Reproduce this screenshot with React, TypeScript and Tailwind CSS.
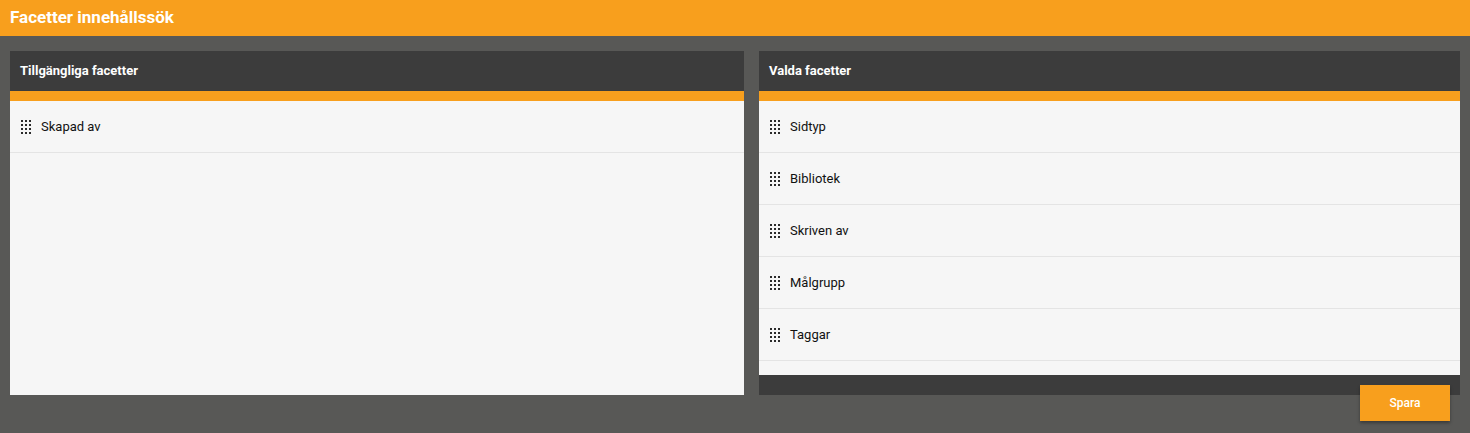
import { ReactNode } from "react";

const font = { fontFamily: "Roboto, 'Liberation Sans', sans-serif" };

function Grip() {
  return (
    <svg width="10" height="14" viewBox="0 0 10 14" className="flex-shrink-0">
      {[0, 4, 8].map((x) =>
        [0, 4, 8, 12].map((y) => <rect key={`${x}-${y}`} x={x} y={y} width="2" height="2" fill="#2b2b2b" />)
      )}
    </svg>
  );
}

function FacetRow({ label }: { label: string }) {
  return (
    <div className="flex items-center gap-[10px] h-[52px] pl-[11px] border-b border-[#e4e4e4] text-[13px] text-[#111111]">
      <Grip />
      <span>{label}</span>
    </div>
  );
}

function Panel({ title, children, footer, className }: { title: string; children: ReactNode; footer?: boolean; className?: string }) {
  return (
    <div className={`flex flex-col bg-[#f6f6f6] h-[344px] ${className ?? ""}`}>
      <div className="h-[40px] bg-[#3c3c3c] flex items-center px-[10px] text-white text-[13px] font-bold">{title}</div>
      <div className="h-[10px] bg-[#f89f1d]" />
      <div className="flex-1">{children}</div>
      {footer && <div className="h-[20px] bg-[#3c3c3c]" />}
    </div>
  );
}

export default function App() {
  const available = ["Skapad av"];
  const selected = ["Sidtyp", "Bibliotek", "Skriven av", "Målgrupp", "Taggar"];

  return (
    <div className="min-h-screen bg-[#585856]" style={font}>
      {/* Title bar */}
      <div className="h-[36px] bg-[#f89f1d] flex items-center px-[10px]">
        <h1 className="text-white text-[17px] font-bold">Facetter innehållssök</h1>
      </div>

      <div className="pt-[15px] px-[10px]">
        <div className="flex gap-[15px]">
          <Panel title="Tillgängliga facetter" className="w-[734px]">
            {available.map((f) => <FacetRow key={f} label={f} />)}
          </Panel>
          <Panel title="Valda facetter" className="flex-1" footer>
            {selected.map((f) => <FacetRow key={f} label={f} />)}
          </Panel>
        </div>
        <div className="flex justify-end pr-[10px] -mt-[10px]">
          <button className="relative w-[90px] h-[36px] bg-[#f89f1d] text-white text-[12px] font-medium shadow-[0_2px_3px_rgba(0,0,0,0.35)]">
            Spara
          </button>
        </div>
      </div>
    </div>
  );
}
